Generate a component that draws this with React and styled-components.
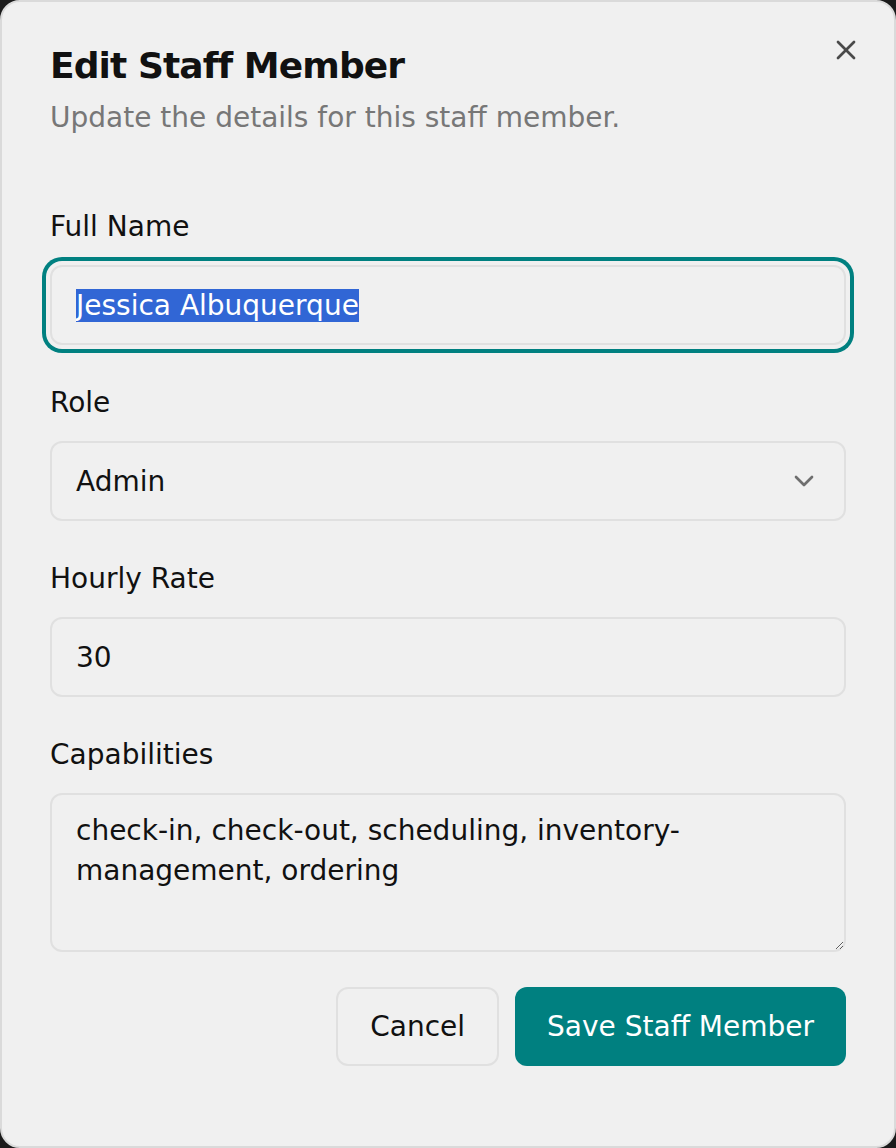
import React, { useEffect, useRef } from "react";
import styled, { createGlobalStyle } from "styled-components";
import { X, ChevronDown } from "lucide-react";

const GlobalStyle = createGlobalStyle`
  html, body {
    margin: 0;
    padding: 0;
    background: #1b1b1b;
  }
  body {
    font-family: "DejaVu Sans", "Noto Sans", sans-serif;
    color: #111;
  }
  *, *::before, *::after {
    box-sizing: border-box;
  }
`;

export default function App() {
  const nameRef = useRef(null);

  useEffect(() => {
    if (nameRef.current) {
      nameRef.current.focus();
      nameRef.current.select();
    }
  }, []);

  return (
    <>
      <GlobalStyle />
      <Dialog role="dialog">
        <CloseButton aria-label="Close">
          <X size={32} strokeWidth={2} />
        </CloseButton>

        <Header>
          <Title>Edit Staff Member</Title>
          <Description>Update the details for this staff member.</Description>
        </Header>

        <Form onSubmit={(e) => e.preventDefault()}>
          <Field>
            <Label htmlFor="name">Full Name</Label>
            <Input id="name" ref={nameRef} defaultValue="Jessica Albuquerque" />
          </Field>

          <Field>
            <Label>Role</Label>
            <SelectTrigger type="button" role="combobox">
              <span>Admin</span>
              <Chevron size={32} strokeWidth={2} />
            </SelectTrigger>
          </Field>

          <Field>
            <Label htmlFor="rate">Hourly Rate</Label>
            <Input id="rate" type="number" defaultValue="30" />
          </Field>

          <Field>
            <Label htmlFor="caps">Capabilities</Label>
            <TextArea
              id="caps"
              defaultValue="check-in, check-out, scheduling, inventory-management, ordering"
            />
          </Field>

          <Footer>
            <Button type="button">Cancel</Button>
            <Button type="submit" $primary>Save Staff Member</Button>
          </Footer>
        </Form>
      </Dialog>
    </>
  );
}

const Dialog = styled.div`
  position: relative;
  min-height: 100vh;
  background: #f0f0f0;
  border: 2px solid #dadada;
  border-radius: 20px;
  padding: 46px 48px 48px;
  display: flex;
  flex-direction: column;
`;

const CloseButton = styled.button`
  position: absolute;
  top: 32px;
  right: 32px;
  width: 32px;
  height: 32px;
  padding: 0;
  border: none;
  background: none;
  color: #4a4a4a;
  display: flex;
  align-items: center;
  justify-content: center;
  cursor: pointer;
`;

const Header = styled.div`
  display: flex;
  flex-direction: column;
  gap: 14px;
`;

const Title = styled.h2`
  margin: 0;
  font-size: 36px;
  line-height: 36px;
  font-weight: 700;
  letter-spacing: -0.9px;
  color: #111;
`;

const Description = styled.p`
  margin: 0;
  font-size: 28px;
  line-height: 40px;
  color: #777;
`;

const Form = styled.form`
  margin-top: 75px;
  display: flex;
  flex-direction: column;
  gap: 44px;
`;

const Field = styled.div`
  display: flex;
  flex-direction: column;
  gap: 24px;
`;

const Label = styled.label`
  font-size: 28px;
  line-height: 28px;
  color: #111;
`;

const Input = styled.input`
  height: 80px;
  width: 100%;
  padding: 0 24px;
  border: 2px solid #e0e0e0;
  border-radius: 12px;
  background: #f0f0f0;
  font-family: inherit;
  font-size: 28px;
  color: #111;
  outline: none;
  -moz-appearance: textfield;

  &::-webkit-inner-spin-button,
  &::-webkit-outer-spin-button {
    -webkit-appearance: none;
    margin: 0;
  }

  &:focus {
    box-shadow: 0 0 0 4px #f0f0f0, 0 0 0 8px #008080;
  }

  &::selection {
    background: #3166d5;
    color: #fff;
  }
`;

const SelectTrigger = styled.button`
  height: 80px;
  width: 100%;
  padding: 0 24px;
  border: 2px solid #e0e0e0;
  border-radius: 12px;
  background: #f0f0f0;
  font-family: inherit;
  font-size: 28px;
  color: #111;
  display: flex;
  align-items: center;
  justify-content: space-between;
  text-align: left;
  cursor: pointer;
`;

const Chevron = styled(ChevronDown)`
  color: #6e6e6e;
  flex-shrink: 0;
`;

const TextArea = styled.textarea`
  height: 159px;
  width: 100%;
  padding: 16px 24px;
  border: 2px solid #e0e0e0;
  border-radius: 12px;
  background: #f0f0f0;
  font-family: inherit;
  font-size: 28px;
  line-height: 40px;
  color: #111;
  resize: vertical;
  outline: none;
`;

const Footer = styled.div`
  margin-top: -9px;
  display: flex;
  justify-content: flex-end;
  gap: 16px;
`;

const Button = styled.button`
  height: 79px;
  padding: 0 32px;
  border-radius: 12px;
  font-family: inherit;
  font-size: 28px;
  cursor: pointer;
  border: ${(p) => (p.$primary ? "none" : "2px solid #e0e0e0")};
  background: ${(p) => (p.$primary ? "#008080" : "#f0f0f0")};
  color: ${(p) => (p.$primary ? "#fff" : "#111")};
`;
